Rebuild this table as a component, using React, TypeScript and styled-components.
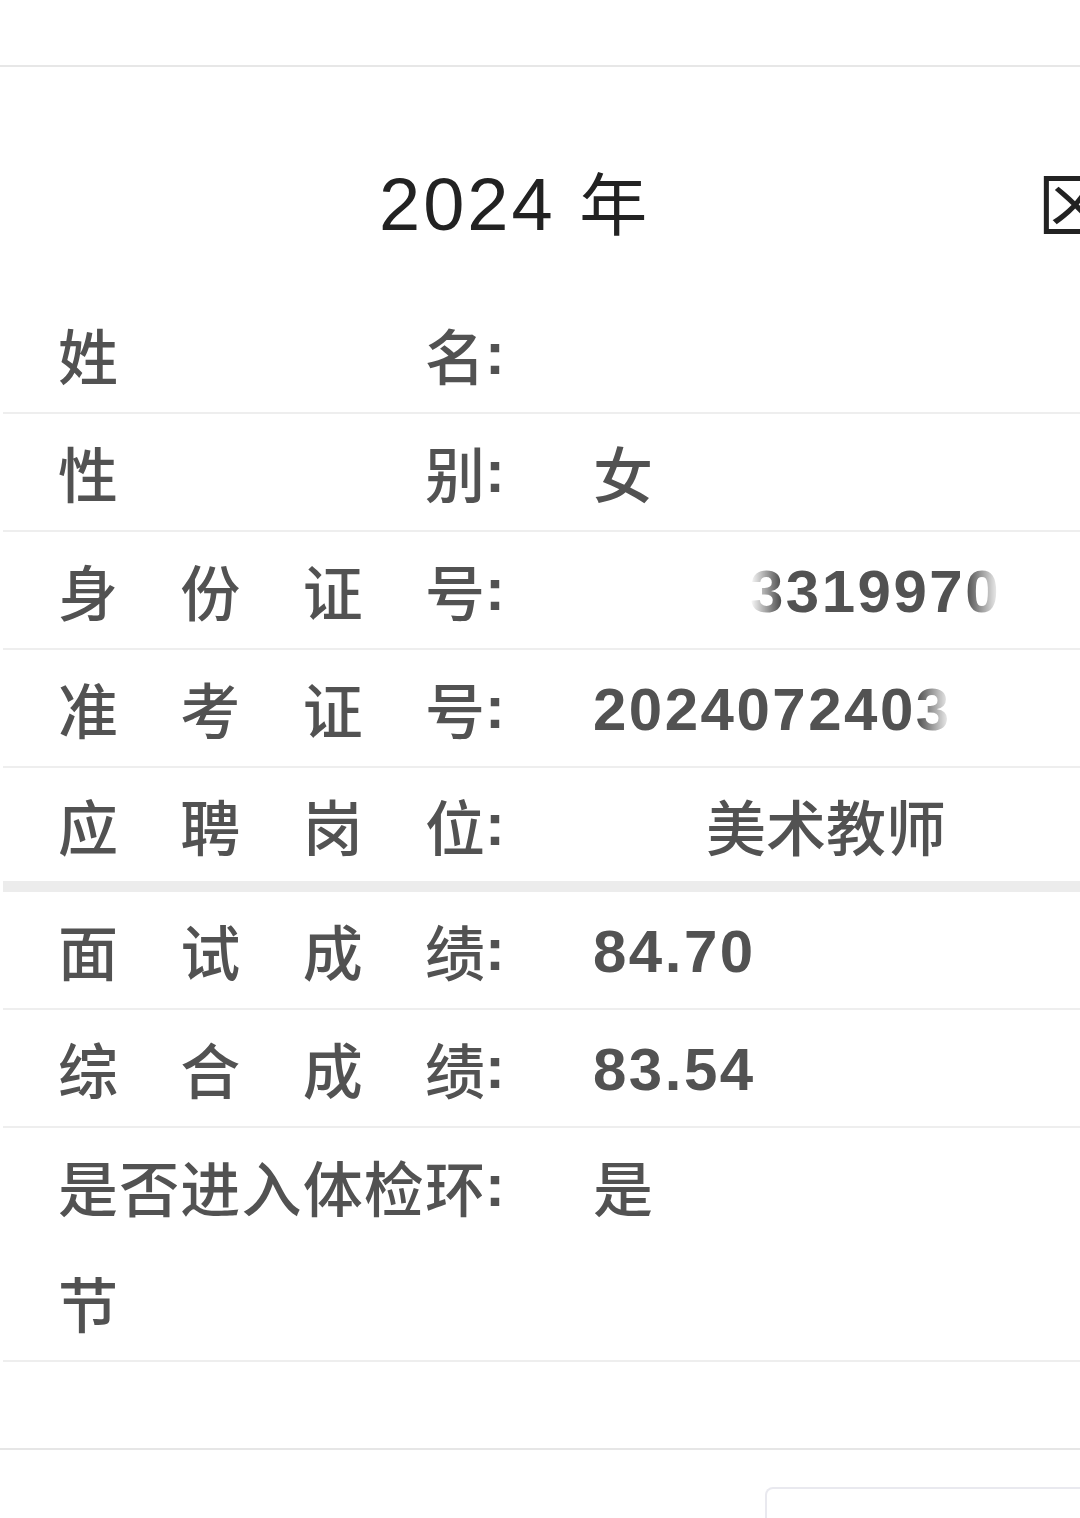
import React from "react";
import styled, { createGlobalStyle } from "styled-components";

const Global = createGlobalStyle`
  html, body { margin: 0; padding: 0; background: #ffffff; }
  body {
    overflow: hidden;
    font-family: "Noto Sans CJK SC", "Liberation Sans", sans-serif;
  }
`;

const Page = styled.div`
  width: 1080px;
  overflow: hidden;
  background: #ffffff;
`;

const TopBar = styled.div`
  height: 65px;
  border-bottom: 2px solid #e7e7e7;
`;

const TitleWrap = styled.div`
  display: flex;
  align-items: center;
  height: 80px;
  padding: 96px 0 53px 379px;
  white-space: nowrap;
  overflow: hidden;
`;

const TitleText = styled.h1`
  margin: 0;
  font: 400 74px/80px "Liberation Sans", "Noto Sans CJK SC", sans-serif;
  letter-spacing: 3px;
  color: #222222;
  flex: none;
`;

const TitleCjk = styled.span`
  font-family: "Noto Sans CJK SC", sans-serif;
  font-size: 68px;
  letter-spacing: 0;
`;

const TitleGap = styled.span`
  display: inline-block;
  width: 390px;
  flex: none;
`;

const Table = styled.div`
  display: flex;
  flex-direction: column;
`;

const Row = styled.div<{ $thick?: boolean; $tight?: boolean }>`
  display: grid;
  grid-template-columns: 427px 108px 1fr;
  margin-left: 3px;
  padding-left: 55px;
  border-bottom: ${(p) => (p.$thick ? "11px solid #ececec" : "2px solid #eeeeee")};
  font-size: 60px;
  line-height: ${(p) => (p.$tight ? "113px" : "116px")};
  color: #525252;
`;

const Label = styled.div`
  font-family: "Noto Sans CJK SC", sans-serif;
  font-weight: 500;
  text-align: justify;
  text-align-last: justify;
`;

const Colon = styled.div`
  font-family: "Liberation Sans", sans-serif;
  font-weight: 700;
`;

const Value = styled.div<{ $num?: boolean }>`
  font-family: ${(p) =>
    p.$num ? '"Liberation Sans", sans-serif' : '"Noto Sans CJK SC", sans-serif'};
  font-weight: ${(p) => (p.$num ? 700 : 500)};
  letter-spacing: ${(p) => (p.$num ? "2.5px" : "0")};
  padding-top: ${(p) => (p.$num ? "6px" : "0")};
  line-height: ${(p) => (p.$num ? "108px" : "inherit")};
  white-space: nowrap;
  overflow: hidden;
`;

const Shifted = styled.span<{ $offset: number; $fadeLeft?: boolean; $fadeRight?: boolean }>`
  display: inline-block;
  margin-left: ${(p) => p.$offset}px;
  -webkit-mask-image: linear-gradient(
    to right,
    ${(p) => (p.$fadeLeft ? "transparent 0, #000 30px" : "#000 0")},
    ${(p) => (p.$fadeRight ? "#000 calc(100% - 34px), transparent 100%" : "#000 100%")}
  );
  mask-image: linear-gradient(
    to right,
    ${(p) => (p.$fadeLeft ? "transparent 0, #000 30px" : "#000 0")},
    ${(p) => (p.$fadeRight ? "#000 calc(100% - 34px), transparent 100%" : "#000 100%")}
  );
`;

const Spacer = styled.div`
  height: 86px;
`;

const FooterLine = styled.div`
  border-top: 2px solid #e6e6e6;
`;

const BottomBar = styled.div`
  display: flex;
  justify-content: flex-end;
  padding-top: 37px;
`;

const BottomBox = styled.div`
  width: 320px;
  height: 80px;
  margin-right: -9px;
  border: 2px solid #e9e9ef;
  border-bottom: none;
  border-radius: 8px 8px 0 0;
`;

type Item = {
  label: string;
  value?: React.ReactNode;
  num?: boolean;
  thick?: boolean;
  tight?: boolean;
};

const items: Item[] = [
  { label: "姓名", value: "" },
  { label: "性别", value: "女" },
  {
    label: "身份证号",
    num: true,
    value: (
      <Shifted $offset={157} $fadeLeft $fadeRight>
        3319970
      </Shifted>
    ),
  },
  {
    label: "准考证号",
    num: true,
    value: (
      <Shifted $offset={0} $fadeRight>
        2024072403
      </Shifted>
    ),
  },
  {
    label: "应聘岗位",
    value: <Shifted $offset={113}>美术教师</Shifted>,
    thick: true,
    tight: true,
  },
  { label: "面试成绩", value: "84.70", num: true },
  { label: "综合成绩", value: "83.54", num: true },
  { label: "是否进入体检环节", value: "是" },
];

export default function App() {
  return (
    <Page>
      <Global />
      <TopBar />
      <TitleWrap>
        <TitleText>
          2024 <TitleCjk>年</TitleCjk>
        </TitleText>
        <TitleGap />
        <TitleText>
          <TitleCjk>区</TitleCjk>
        </TitleText>
      </TitleWrap>
      <Table>
        {items.map((it) => (
          <Row key={it.label} $thick={it.thick} $tight={it.tight}>
            <Label>{it.label}</Label>
            <Colon>:</Colon>
            <Value $num={it.num}>{it.value}</Value>
          </Row>
        ))}
      </Table>
      <Spacer />
      <FooterLine />
      <BottomBar>
        <BottomBox />
      </BottomBar>
    </Page>
  );
}
